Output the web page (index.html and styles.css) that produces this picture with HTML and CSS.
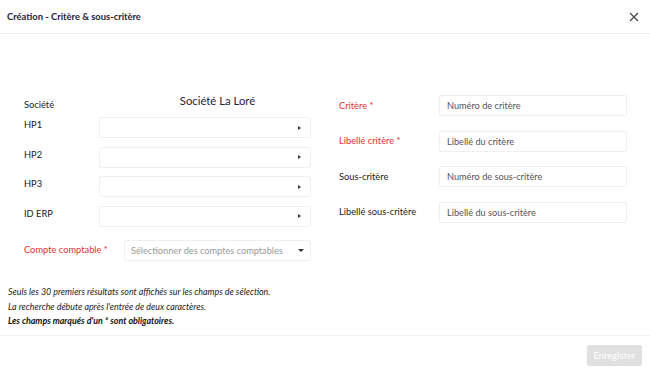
FILE: index.html
```html
<!DOCTYPE html>
<html lang="fr">
<head>
    <meta charset="UTF-8">
    <meta name="viewport" content="width=device-width, initial-scale=1.0">
    <title>Création - Critère &amp; sous-critère</title>
    <link rel="stylesheet" href="styles.css">
</head>
<body>
    <div class="modal">
        <div class="modal-header">
            <h1 class="modal-title">Création - Critère &amp; sous-critère</h1>
            <button class="close-btn" aria-label="Fermer">
                <svg width="10" height="10" viewBox="0 0 10 10"><path d="M1 1L9 9M9 1L1 9" stroke="#444" stroke-width="1.2" fill="none"/></svg>
            </button>
        </div>

        <div class="modal-body">
            <div class="columns">
                <div class="col-left">
                    <div class="society-row">
                        <span class="label society-label">Société</span>
                        <span class="society-name">Société La Loré</span>
                    </div>
                    <div class="hp-rows">
                        <div class="field-row">
                            <label class="label">HP1</label>
                            <div class="select-box"><span class="caret-right"></span></div>
                        </div>
                        <div class="field-row">
                            <label class="label">HP2</label>
                            <div class="select-box"><span class="caret-right"></span></div>
                        </div>
                        <div class="field-row">
                            <label class="label">HP3</label>
                            <div class="select-box"><span class="caret-right"></span></div>
                        </div>
                        <div class="field-row">
                            <label class="label">ID ERP</label>
                            <div class="select-box"><span class="caret-right"></span></div>
                        </div>
                    </div>
                    <div class="account-row">
                        <label class="label required">Compte comptable *</label>
                        <div class="select-box account-select">
                            <span class="placeholder">Sélectionner des comptes comptables</span>
                            <span class="caret-down"></span>
                        </div>
                    </div>
                </div>

                <div class="col-right">
                    <div class="input-row">
                        <label class="label required">Critère *</label>
                        <input class="text-input" type="text" placeholder="Numéro de critère">
                    </div>
                    <div class="input-row">
                        <label class="label required">Libellé critère *</label>
                        <input class="text-input" type="text" placeholder="Libellé du critère">
                    </div>
                    <div class="input-row">
                        <label class="label">Sous-critère</label>
                        <input class="text-input" type="text" placeholder="Numéro de sous-critère">
                    </div>
                    <div class="input-row">
                        <label class="label">Libellé sous-critère</label>
                        <input class="text-input" type="text" placeholder="Libellé du sous-critère">
                    </div>
                </div>
            </div>

            <div class="notes">
                <p>Seuls les 30 premiers résultats sont affichés sur les champs de sélection.</p>
                <p>La recherche débute après l'entrée de deux caractères.</p>
                <p class="notes-strong">Les champs marqués d'un * sont obligatoires.</p>
            </div>
        </div>

        <div class="modal-footer">
            <button class="save-btn" disabled>Enregister</button>
        </div>
    </div>
</body>
</html>
```

FILE: styles.css
```css
body {
    margin: 0;
    font-family: Lato, "Liberation Sans", sans-serif;
    background: #fff;
    color: #222;
}

.modal {
    width: 650px;
    height: 375px;
    display: flex;
    flex-direction: column;
}

.modal-header {
    height: 34px;
    padding: 0 10px 0 7px;
    display: flex;
    align-items: center;
    justify-content: space-between;
    border-bottom: 1px solid #f1f1f1;
    box-sizing: border-box;
}

.modal-title {
    margin: 0 0 1px;
    font-size: 9.4px;
    font-weight: 700;
    color: #1d2340;
}

.close-btn {
    background: none;
    border: none;
    padding: 0;
    width: 12px;
    height: 12px;
    display: flex;
    align-items: center;
    justify-content: center;
    cursor: pointer;
}

.modal-body {
    padding: 59px 23px 0 24px;
    flex: 1;
}

.columns {
    display: flex;
    gap: 28px;
    height: 168px;
}

.col-left {
    width: 287px;
}

.col-right {
    width: 288px;
    display: flex;
    flex-direction: column;
    gap: 14.5px;
    padding-top: 2px;
}

.label {
    font-size: 9.3px;
    line-height: 16px;
    color: #1a1a1a;
}

.required {
    color: #e2312f;
}

.society-row {
    display: flex;
    height: 24px;
}

.society-label {
    width: 100px;
    padding-top: 4px;
}

.society-name {
    width: 187px;
    text-align: center;
    font-size: 11.3px;
    line-height: 16px;
    color: #1d2340;
}

.hp-rows {
    display: flex;
    flex-direction: column;
    gap: 8.5px;
}

.field-row {
    display: flex;
    align-items: flex-start;
}

.field-row .label {
    width: 75px;
}

.select-box {
    width: 212px;
    height: 21px;
    border: 1px solid #f0f0f0;
    border-radius: 2px;
    box-sizing: border-box;
    display: flex;
    align-items: center;
    justify-content: flex-end;
    padding: 0 9px;
}

.caret-right {
    width: 0;
    height: 0;
    border-top: 2.5px solid transparent;
    border-bottom: 2.5px solid transparent;
    border-left: 3px solid #333;
}

.account-row {
    display: flex;
    align-items: center;
    margin-top: 13px;
}

.account-row .label {
    width: 100px;
}

.account-select {
    width: 187px;
    justify-content: space-between;
    padding: 0 6px 0 6px;
}

.placeholder {
    font-size: 9.2px;
    color: #9a9a9a;
}

.caret-down {
    width: 0;
    height: 0;
    border-left: 3px solid transparent;
    border-right: 3px solid transparent;
    border-top: 3px solid #333;
}

.input-row {
    display: flex;
    align-items: center;
}

.input-row .label {
    width: 100px;
}

.text-input {
    width: 188px;
    height: 21px;
    border: 1px solid #f0f0f0;
    border-radius: 2px;
    box-sizing: border-box;
    padding: 0 7px;
    font-family: Lato, "Liberation Sans", sans-serif;
    font-size: 9.2px;
    outline: none;
}

.text-input::placeholder {
    color: #555;
}

.notes {
    margin: 24px 0 0 -16px;
    font-size: 8.9px;
    font-style: italic;
    line-height: 14.5px;
    color: #222;
}

.notes p {
    margin: 0;
}

.notes-strong {
    font-weight: 700;
    color: #111;
}

.modal-footer {
    border-top: 1px solid #f3f3f3;
    height: 40px;
    padding: 0 8px;
    display: flex;
    align-items: center;
    justify-content: flex-end;
    box-sizing: border-box;
}

.save-btn {
    width: 55px;
    height: 21px;
    border: none;
    border-radius: 2px;
    background-color: #e0e0e0;
    color: #fff;
    font-family: Lato, "Liberation Sans", sans-serif;
    font-size: 9.5px;
    padding: 0;
}
```
